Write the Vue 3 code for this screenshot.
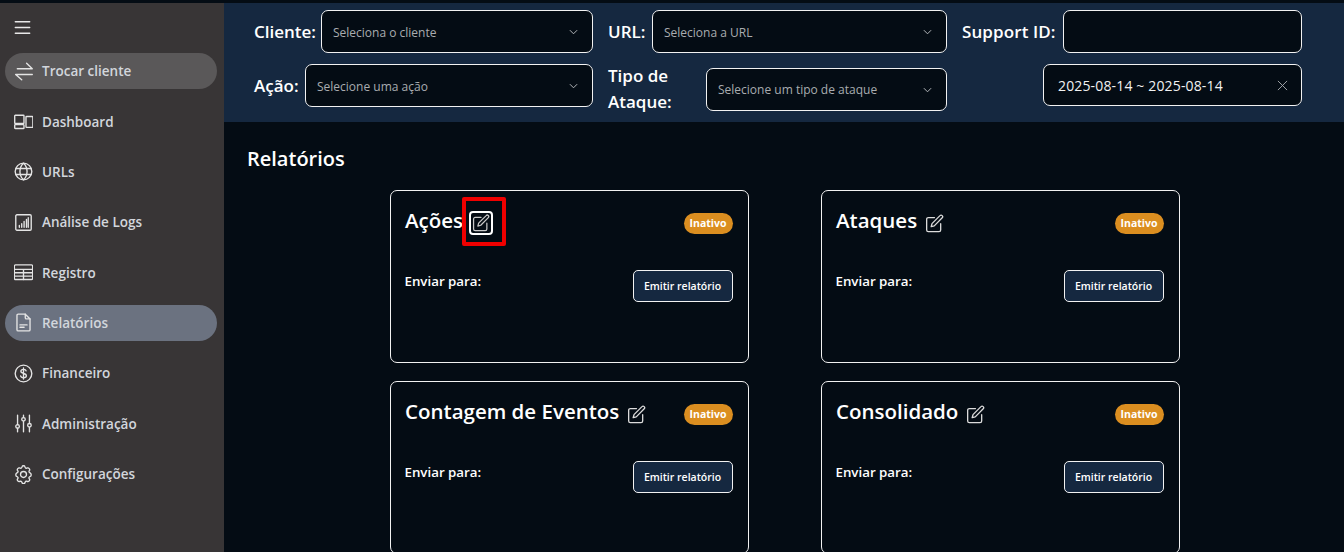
<template>
  <div class="page">
    <aside class="sidebar">
      <button class="burger" aria-label="menu">
        <svg width="23" height="23" viewBox="0 0 16 16" fill="currentColor">
          <path fill-rule="evenodd" d="M2.5 12a.5.5 0 0 1 .5-.5h10a.5.5 0 0 1 0 1H3a.5.5 0 0 1-.5-.5m0-4a.5.5 0 0 1 .5-.5h10a.5.5 0 0 1 0 1H3a.5.5 0 0 1-.5-.5m0-4a.5.5 0 0 1 .5-.5h10a.5.5 0 0 1 0 1H3a.5.5 0 0 1-.5-.5" />
        </svg>
      </button>
      <nav class="menu">
        <a v-for="item in menu" :key="item.label" class="menu-item" :class="item.state">
          <svg class="menu-icon" viewBox="0 0 16 16" fill="none" stroke="currentColor" stroke-width="1.15" stroke-linecap="round" stroke-linejoin="round">
            <path v-for="(d, i) in item.paths" :key="i" :d="d" />
          </svg>
          <span>{{ item.label }}</span>
        </a>
      </nav>
    </aside>

    <div class="content">
      <header class="filters">
        <div class="field">
          <label class="lb-cliente">Cliente:</label>
          <div class="select"><span>Seleciona o cliente</span><svg class="chev" viewBox="0 0 10 6"><path d="M1 1l4 4 4-4" /></svg></div>
        </div>
        <div class="field">
          <label class="lb-url">URL:</label>
          <div class="select"><span>Seleciona a URL</span><svg class="chev" viewBox="0 0 10 6"><path d="M1 1l4 4 4-4" /></svg></div>
        </div>
        <div class="field">
          <label class="lb-support">Support ID:</label>
          <div class="select"></div>
        </div>
        <div class="field">
          <label class="lb-acao">Ação:</label>
          <div class="select"><span>Selecione uma ação</span><svg class="chev" viewBox="0 0 10 6"><path d="M1 1l4 4 4-4" /></svg></div>
        </div>
        <div class="field tipo">
          <label>Tipo de Ataque:</label>
          <div class="select"><span>Selecione um tipo de ataque</span><svg class="chev" viewBox="0 0 10 6"><path d="M1 1l4 4 4-4" /></svg></div>
        </div>
        <div class="field date">
          <div class="select range">
            <span>2025-08-14 ~ 2025-08-14</span>
            <svg class="close" viewBox="0 0 12 12"><path d="M1 1l10 10M11 1L1 11" /></svg>
          </div>
        </div>
      </header>

      <main class="main">
        <h2 class="title">Relatórios</h2>
        <div class="cards">
          <section v-for="card in cards" :key="card.name" class="card">
            <div class="card-top">
              <h3>{{ card.name }}</h3>
              <span class="edit" :class="{ marked: card.marked }">
                <svg width="19" height="19" viewBox="0 0 16 16" fill="none" stroke="currentColor" stroke-width="1.1" stroke-linecap="round" stroke-linejoin="round">
                  <path d="M8 3H2.8a1.4 1.4 0 0 0-1.4 1.4v9a1.4 1.4 0 0 0 1.4 1.4h9a1.4 1.4 0 0 0 1.4-1.4V8.2" />
                  <path d="M12.6 1.4a1.2 1.2 0 0 1 1.9 1.8L7.8 10l-2.6.7.7-2.6z" />
                </svg>
              </span>
              <span class="badge">Inativo</span>
            </div>
            <div class="card-body">
              <span class="send">Enviar para:</span>
              <button class="emit">Emitir relatório</button>
            </div>
          </section>
        </div>
      </main>
    </div>
  </div>
</template>

<script setup>
const menu = [
  { label: "Trocar cliente", state: "swap", paths: ["M2.8 5.7H15.4L10.6 1", "M15.4 10.5H1.4L6.5 15"] },
  { label: "Dashboard", paths: ["M1.1 2.7h6.8a.5.5 0 0 1 .5.5v6a.5.5 0 0 1-.5.5H1.1a.5.5 0 0 1-.5-.5v-6a.5.5 0 0 1 .5-.5z", "M1.1 10.6h6.8a.5.5 0 0 1 .5.5v2.3a.5.5 0 0 1-.5.5H1.1a.5.5 0 0 1-.5-.5v-2.3a.5.5 0 0 1 .5-.5z", "M10.6 3.8h4.8a.5.5 0 0 1 .5.5v8.2a.5.5 0 0 1-.5.5h-4.8a.5.5 0 0 1-.5-.5V4.3a.5.5 0 0 1 .5-.5z"] },
  { label: "URLs", paths: ["M8 1a7 7 0 1 0 0 14A7 7 0 0 0 8 1z", "M8 1c-2 1.8-3 4.2-3 7s1 5.2 3 7c2-1.8 3-4.2 3-7s-1-5.2-3-7z", "M1.6 5.5h12.8M1.6 10.5h12.8"] },
  { label: "Análise de Logs", paths: ["M2.5 1.5h11a1 1 0 0 1 1 1v11a1 1 0 0 1-1 1h-11a1 1 0 0 1-1-1v-11a1 1 0 0 1 1-1z", "M4.5 12v-1.5M6.5 12V9M8.5 12V7M10.5 12V5.5M12 12V4"] },
  { label: "Registro", paths: ["M1.3 1.6h13.4a1 1 0 0 1 1 1v10.3a1 1 0 0 1-1 1H1.3a1 1 0 0 1-1-1V2.6a1 1 0 0 1 1-1z", "M.3 5.4h15.4M.3 8.2h15.4M.3 11h15.4M8 5.4v8.5"] },
  { label: "Relatórios", state: "active", paths: ["M3.5 1h6L13.5 5v9a1 1 0 0 1-1 1h-9a1 1 0 0 1-1-1V2a1 1 0 0 1 1-1z", "M9.5 1v3a1 1 0 0 0 1 1h3", "M5 10h6M5 12h3.5"] },
  { label: "Financeiro", paths: ["M8 1a7 7 0 1 0 0 14A7 7 0 0 0 8 1z", "M10.2 5.8C10 4.9 9.2 4.5 8 4.5c-1.3 0-2.2.6-2.2 1.7 0 2.4 4.6 1.2 4.6 3.6 0 1.1-1 1.7-2.4 1.7-1.3 0-2.2-.5-2.4-1.5M8 3.4v9.2"] },
  { label: "Administração", paths: ["M3 1v8M3 12v3M8 1v2M8 6v9M13 1v7M13 11v4", "M3 9a1.5 1.5 0 1 0 0 3 1.5 1.5 0 0 0 0-3zM8 3a1.5 1.5 0 1 0 0 3 1.5 1.5 0 0 0 0-3zM13 8a1.5 1.5 0 1 0 0 3 1.5 1.5 0 0 0 0-3z"] },
  { label: "Configurações", paths: ["M8 5.5a2.5 2.5 0 1 0 0 5 2.5 2.5 0 0 0 0-5z", "M6.8 1.4c.3-1 2.1-1 2.4 0l.2.6c.2.6.8.9 1.4.7l.6-.2c1-.3 2.2 1 1.7 2l-.3.5c-.3.5-.1 1.2.4 1.5l.6.3c.9.5.9 2.3 0 2.8l-.6.3c-.5.3-.7 1-.4 1.5l.3.5c.5 1-.7 2.3-1.7 2l-.6-.2c-.6-.2-1.2.1-1.4.7l-.2.6c-.3 1-2.1 1-2.4 0l-.2-.6c-.2-.6-.8-.9-1.4-.7l-.6.2c-1 .3-2.2-1-1.7-2l.3-.5c.3-.5.1-1.2-.4-1.5l-.6-.3c-.9-.5-.9-2.3 0-2.8l.6-.3c.5-.3.7-1 .4-1.5l-.3-.5c-.5-1 .7-2.3 1.7-2l.6.2c.6.2 1.2-.1 1.4-.7z"] },
];

const cards = [
  { name: "Ações", marked: true },
  { name: "Ataques" },
  { name: "Contagem de Eventos" },
  { name: "Consolidado" },
];
</script>

<style>
html,
body {
  margin: 0;
  background: #040c14;
  overflow: hidden;
}
</style>

<style scoped>
.page {
  display: flex;
  height: 552px;
  padding-top: 3px;
  box-sizing: border-box;
  overflow: hidden;
  background: #040c14;
  color: #fff;
  font-family: "Open Sans", "Noto Sans", sans-serif;
}

/* barra lateral */
.sidebar {
  width: 224px;
  flex: none;
  background: #383536;
  padding: 13.25px 7px 0 5px;
  box-sizing: border-box;
}
.burger {
  display: block;
  background: none;
  border: 0;
  padding: 0;
  margin: 0 0 14px 6px;
  height: 23px;
  color: #e8e8e8;
}
.menu {
  display: flex;
  flex-direction: column;
  gap: 14.35px;
}
.menu-item {
  display: flex;
  align-items: center;
  gap: 9px;
  height: 36px;
  padding-left: 9px;
  border-radius: 18px;
  font-size: 13.5px;
  font-weight: 600;
  color: #d2d6dc;
}
.menu-item.swap {
  background: #5a5859;
}
.menu-item.active {
  background: #6b7280;
}
.menu-icon {
  width: 19px;
  height: 19px;
  flex: none;
  color: #e4e4e4;
}

/* filtros */
.content {
  flex: 1;
  min-width: 0;
}
.filters {
  display: grid;
  grid-template-columns: 339px 339px 340px;
  grid-auto-rows: 43px;
  align-content: start;
  column-gap: 15px;
  row-gap: 11px;
  height: 119px;
  box-sizing: border-box;
  padding: 7px 0 0 30px;
  background: #152840;
}
.field {
  display: flex;
  align-items: center;
  gap: 6px;
  height: 43px;
}
.field label {
  flex: none;
  font-size: 17px;
  font-weight: 600;
  white-space: nowrap;
}
.field .lb-cliente {
  width: 61px;
}
.field .lb-url {
  width: 38px;
}
.field .lb-support {
  width: 95px;
  letter-spacing: 0.1px;
}
.field .lb-acao {
  width: 45px;
}
.select {
  flex: 1;
  height: 43px;
  box-sizing: border-box;
  display: flex;
  align-items: center;
  justify-content: space-between;
  padding: 0 14px 0 11px;
  background: #040c14;
  border: 1px solid #f2f2f2;
  border-radius: 7px;
  font-size: 12px;
  color: #a9acb0;
}
.select span {
  margin-top: 1px;
}
.chev {
  width: 9px;
  height: 6px;
  fill: none;
  stroke: #b5b8bb;
  stroke-width: 1.1;
}
.tipo {
  align-items: flex-start;
  gap: 0;
}
.field.tipo label {
  width: 98px;
  margin-top: -1px;
  white-space: normal;
  line-height: 26px;
}
.tipo .select {
  margin-top: 4px;
  flex: none;
  width: 241px;
}
.tipo .select span {
  margin-top: 0;
}
.date {
  justify-content: flex-end;
  align-items: flex-start;
}
.range {
  flex: none;
  width: 259px;
  height: 42px;
  padding: 0 13px 0 14px;
  font-size: 14px;
  letter-spacing: 0.15px;
  color: #f2f2f2;
}
.close {
  width: 11px;
  height: 11px;
  fill: none;
  stroke: #a9acb0;
  stroke-width: 1;
}

/* relatórios */
.main {
  padding: 24px 0 0 23px;
}
.title {
  margin: 0 0 19px;
  font-size: 20px;
  line-height: 25px;
  font-weight: 600;
}
.cards {
  display: grid;
  grid-template-columns: repeat(2, 359px);
  grid-auto-rows: 173px;
  justify-content: center;
  column-gap: 72px;
  row-gap: 18px;
  margin-left: -22px;
}
.card {
  border: 1px solid #f2f2f2;
  border-radius: 7px;
  padding: 15px 15px 0 14px;
  box-sizing: border-box;
}
.card-top {
  display: flex;
  align-items: center;
  height: 34px;
}
.card-top h3 {
  margin: 0 0 6px 0.5px;
  font-size: 20.5px;
  font-weight: 600;
}
.edit {
  position: relative;
  display: flex;
  margin-left: 8px;
  color: #dcdcdc;
}
.edit.marked {
  margin-left: 6px;
  padding: 1px;
  border: 2px solid #fff;
  border-radius: 4px;
  color: #c8c8c8;
}
.edit.marked svg {
  width: 18px;
  height: 18px;
}
.edit.marked::after {
  content: "";
  position: absolute;
  left: -9px;
  top: -16px;
  width: 36px;
  height: 41px;
  border: 4px solid #f00000;
  border-radius: 2px;
}
.badge {
  margin-left: auto;
  width: 49px;
  height: 21px;
  line-height: 21px;
  text-align: center;
  border-radius: 11px;
  background: #db8e20;
  font-size: 10.5px;
  font-weight: 700;
}
.card-body {
  display: flex;
  justify-content: space-between;
  align-items: flex-start;
  margin-top: 30px;
}
.send {
  margin-top: 2px;
  font-size: 13.3px;
  font-weight: 600;
}
.emit {
  width: 100px;
  height: 32px;
  padding: 0;
  background: #152840;
  border: 1px solid #f2f2f2;
  border-radius: 5px;
  color: #fff;
  font-family: inherit;
  font-size: 10.5px;
  font-weight: 600;
}
</style>
